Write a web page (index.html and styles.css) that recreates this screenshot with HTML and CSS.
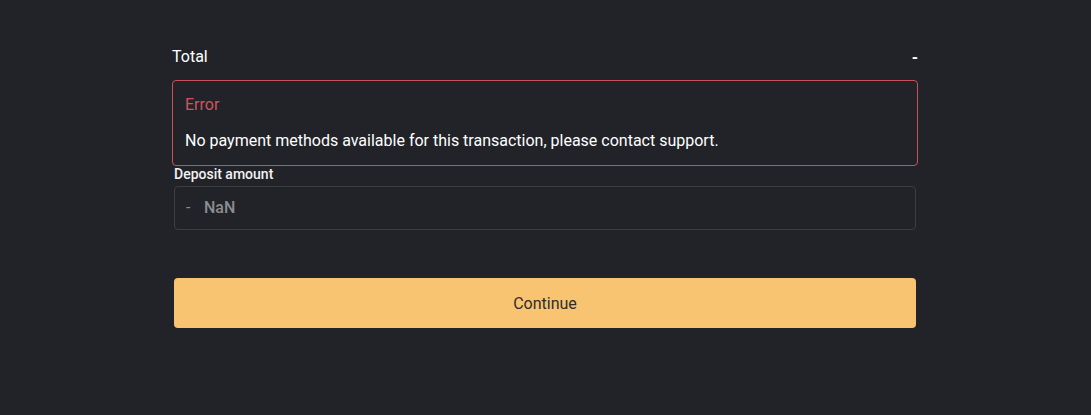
FILE: index.html
```html
<!DOCTYPE html>
<html>
<head>
<meta charset="utf-8">
<link rel="stylesheet" href="styles.css">
</head>
<body>
<div class="page">
  <div class="panel">
    <div class="total-row">
      <span class="total-label">Total</span>
      <span class="total-value">-</span>
    </div>
    <div class="error-box">
      <div class="error-title">Error</div>
      <div class="error-msg">No payment methods available for this transaction, please contact support.</div>
    </div>
    <div class="field">
      <label class="field-label">Deposit amount</label>
      <div class="input">
        <span class="prefix">-</span>
        <span class="value">NaN</span>
      </div>
    </div>
    <button class="continue">Continue</button>
  </div>
</div>
</body>
</html>
```

FILE: styles.css
```css
html, body {
  margin: 0;
  padding: 0;
  background: #212328;
  font-family: Roboto, "Liberation Sans", sans-serif;
}
.page {
  height: 415px;
  display: flex;
  justify-content: center;
  padding-right: 1px;
}
.panel {
  width: 746px;
  padding-top: 45px;
}
.total-row {
  display: flex;
  justify-content: space-between;
  align-items: center;
  height: 22px;
  color: #ffffff;
  font-size: 16px;
}
.total-value {
  font-weight: 700;
  font-size: 16px;
  line-height: 22px;
  padding-top: 3px;
  padding-right: 0;
}
.error-box {
  margin-top: 13px;
  border: 1px solid #c9525a;
  border-radius: 4px;
  padding: 14px 12px 12px 12px;
  height: 58px;
}
.error-title {
  color: #d2535b;
  font-size: 16px;
  line-height: 20px;
}
.error-msg {
  margin-top: 16px;
  color: #ffffff;
  font-size: 16px;
  line-height: 20px;
}
.field {
  margin: 0 2px;
}
.field-label {
  display: block;
  color: #f2f2f2;
  font-size: 14px;
  font-weight: 500;
  line-height: 18px;
  margin-top: -1px;
}
.input {
  margin-top: 3px;
  height: 42px;
  border: 1px solid #3a3d42;
  border-radius: 4px;
  display: flex;
  align-items: center;
  padding-left: 11px;
  color: #8b8d91;
  font-size: 16px;
  font-weight: 500;
}
.value {
  margin-top: -2px;
}
.prefix {
  font-weight: 400;
  width: 18px;
  margin-top: -2px;
}
.continue {
  display: block;
  margin: 48px 2px 0 2px;
  width: 742px;
  height: 50px;
  border: none;
  border-radius: 4px;
  background: #f8c471;
  color: #2d2d2d;
  font-family: Roboto, "Liberation Sans", sans-serif;
  font-size: 16px;
}
```
